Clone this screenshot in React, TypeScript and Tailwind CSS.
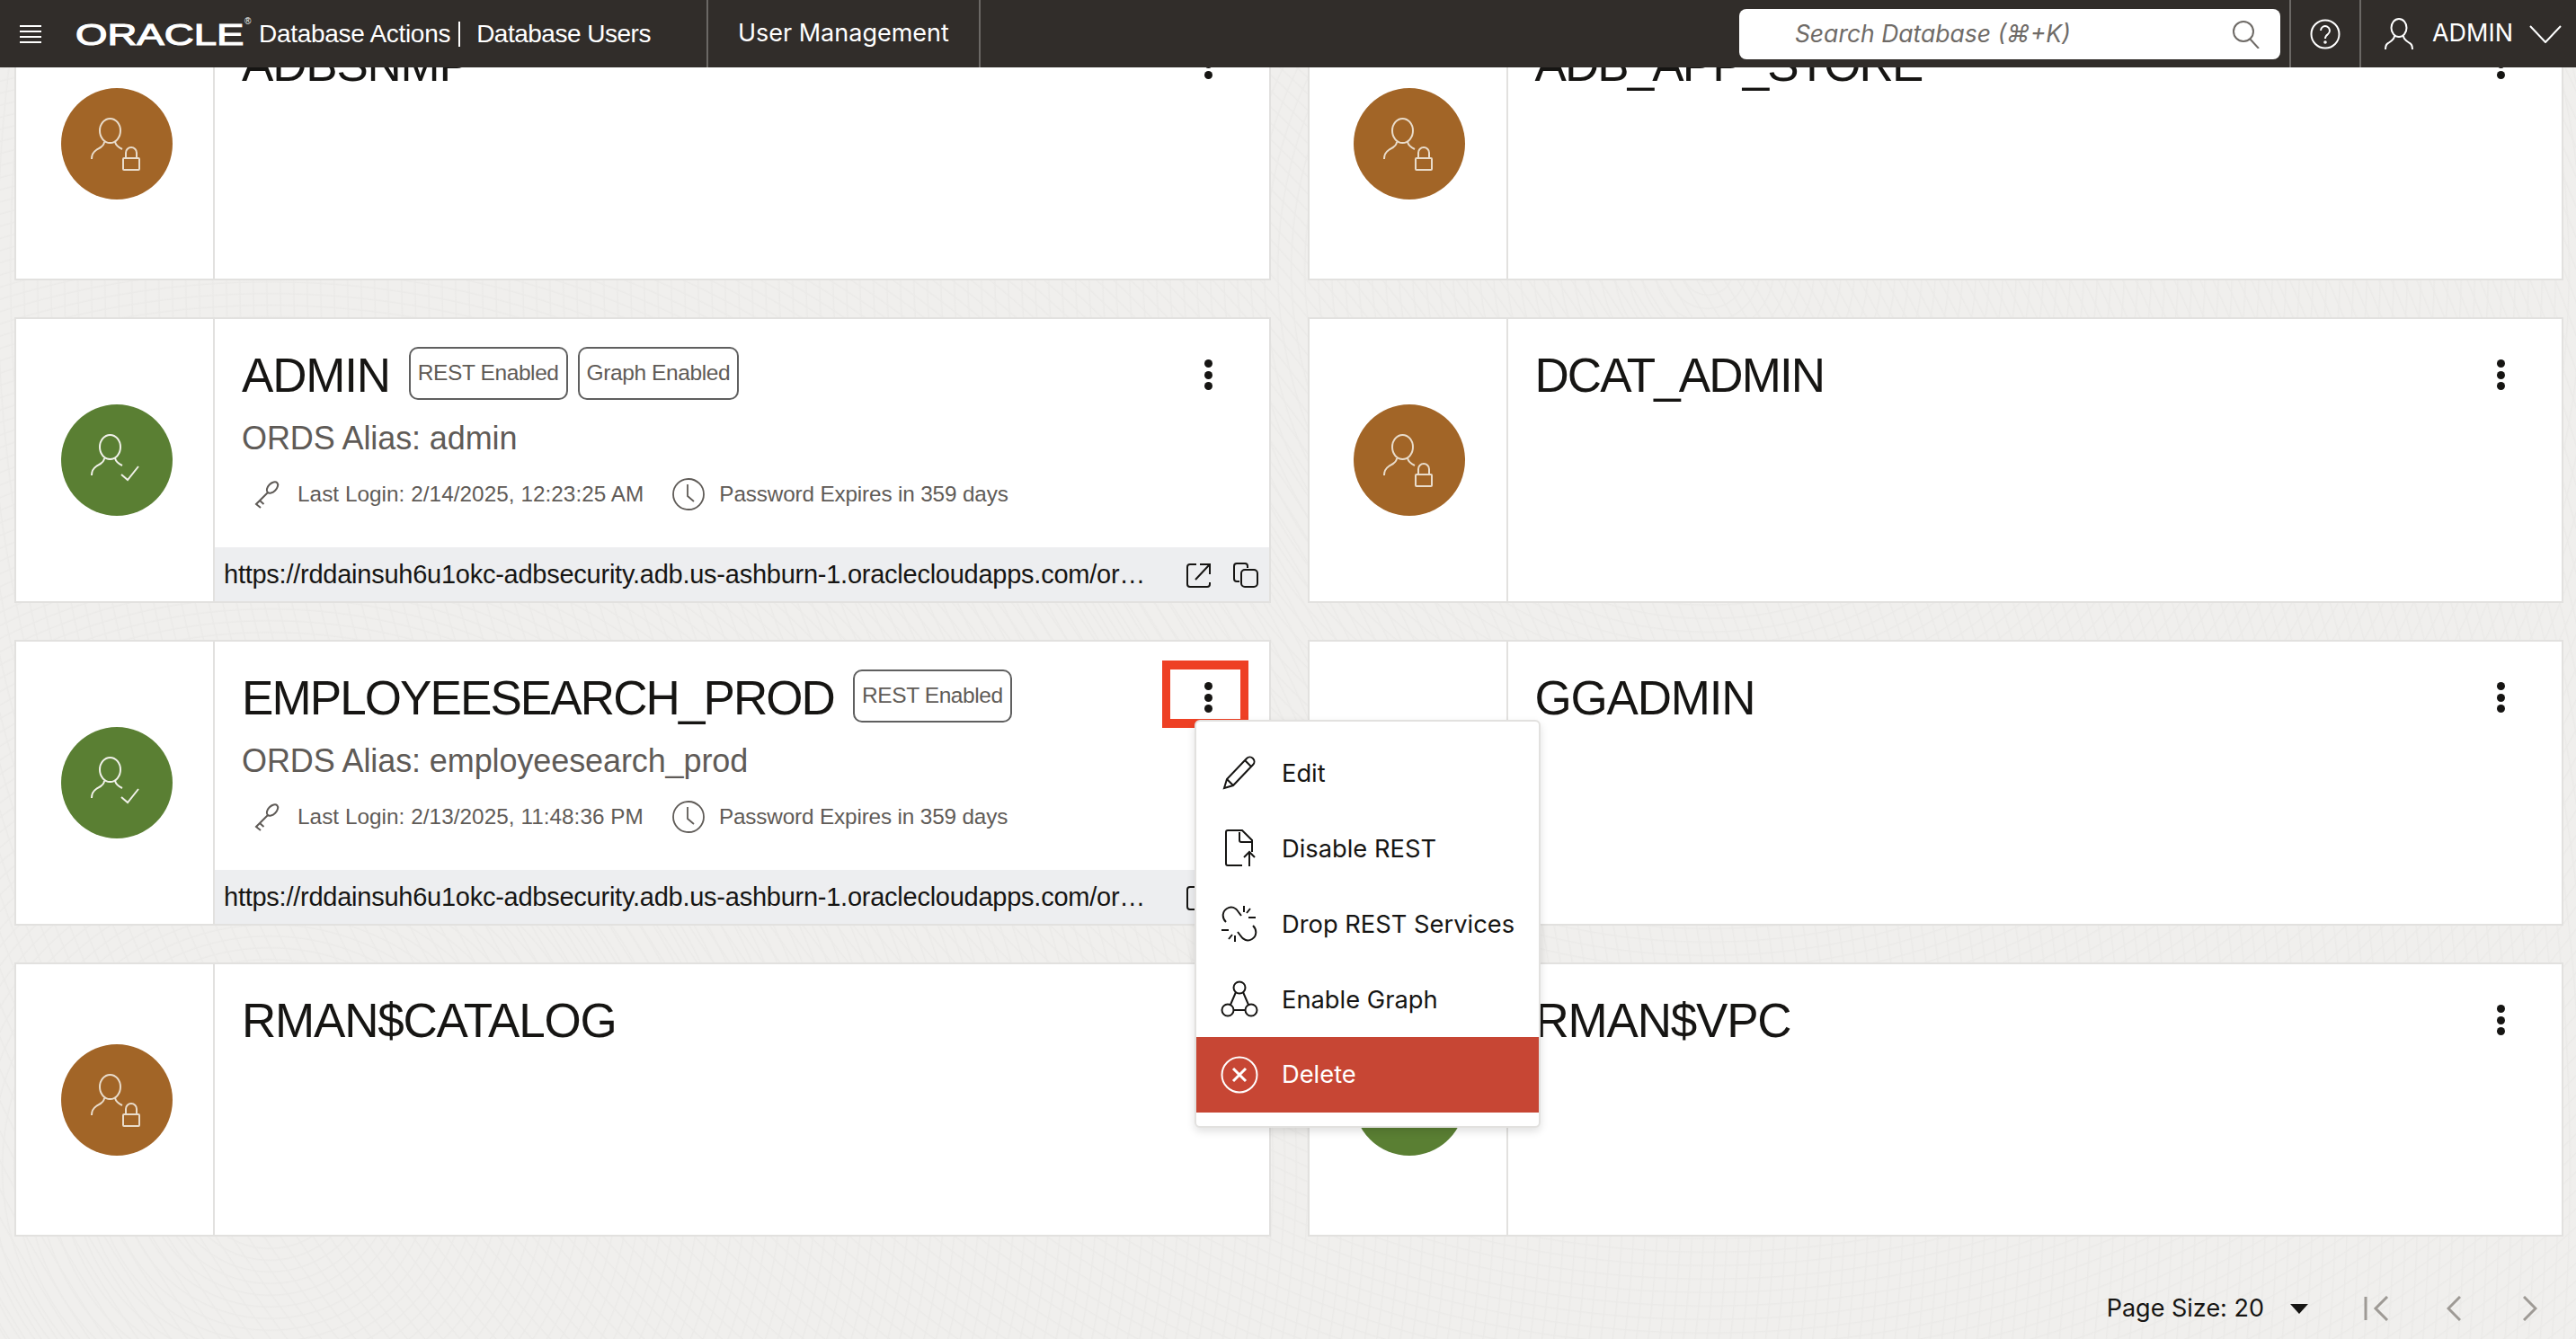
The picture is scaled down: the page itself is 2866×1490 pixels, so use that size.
import type { ReactNode } from "react";

const URL_TEXT =
  "https://rddainsuh6u1okc-adbsecurity.adb.us-ashburn-1.oraclecloudapps.com/ords/admin/_sdw/";

type CardProps = {
  name: string;
  active?: boolean;
  badges?: string[];
  alias?: string;
  login?: string;
  tall?: boolean;
  children?: ReactNode;
};

function UserAvatar({ active }: { active?: boolean }) {
  return (
    <div
      className={`h-[124px] w-[124px] rounded-full ${active ? "bg-[#5a7f33]" : "bg-[#a26527]"}`}
    >
      <svg
        viewBox="0 0 124 124"
        className={`h-full w-full fill-none stroke-2 ${active ? "stroke-[#f1f1ea]" : "stroke-[#e9dccb]"}`}
      >
        <ellipse cx="54.5" cy="47.5" rx="11.5" ry="13.5" />
        <path d="M48 60c0 5-6 7-9 9-3 2-5 5-5 10M60 60c1 4 4 6 8 8" />
        {active ? (
          <path d="M67 78l7 6 12-15" />
        ) : (
          <>
            <rect x="69" y="78" width="18" height="13" rx="1" />
            <path d="M72 78v-6a6 6 0 0 1 12 0v6" />
          </>
        )}
      </svg>
    </div>
  );
}

function Kebab() {
  return (
    <div className="flex h-[34px] w-[10px] flex-col justify-between">
      <span className="h-[9px] w-[9px] rounded-full bg-[#161513]" />
      <span className="h-[9px] w-[9px] rounded-full bg-[#161513]" />
      <span className="h-[9px] w-[9px] rounded-full bg-[#161513]" />
    </div>
  );
}

function KeyIcon() {
  return (
    <svg viewBox="0 0 28 32" className="h-[32px] w-[28px] fill-none stroke-[#5f5b57] stroke-2">
      <ellipse cx="20" cy="8.500" rx="7.500" ry="4.500" transform="rotate(-45 20 8.500)" />
      <path d="M15 14L2 27l5 4M6 23l4.500 4M2 27l5 4" />
    </svg>
  );
}

function ClockIcon() {
  return (
    <svg viewBox="0 0 38 38" className="h-[38px] w-[38px] fill-none stroke-[#5f5b57] stroke-[1.8]">
      <circle cx="19" cy="19" r="17" />
      <path d="M18 8v13l7 6" />
    </svg>
  );
}

function UserCard({ name, active, badges = [], alias, login, tall, children }: CardProps) {
  return (
    <div
      className={`relative flex border-2 border-[#e2e1df] bg-white ${tall ? "h-[318px]" : "h-[305px]"}`}
    >
      <div className="flex w-[221px] shrink-0 items-center justify-center border-r-2 border-[#e2e1df] pl-[4px]">
        <UserAvatar active={active} />
      </div>
      <div className="flex min-w-0 flex-1 flex-col">
        <div className="flex flex-1 flex-col pl-[30px] pr-[62px] pt-[33px]">
          <div className="flex h-[60px] items-center">
            <span
              className={`text-[53px] leading-[60px] text-[#161513] ${name.includes("_") ? "tracking-[-1.9px]" : "tracking-[-1.2px]"}`}
            >
              {name}
            </span>
            {badges.map((badge, i) => (
              <span
                key={badge}
                className={`flex h-[59px] -translate-y-[3px] items-center rounded-[10px] border-2 border-[#5f5f5f] px-[8px] text-[24.500px] tracking-[-0.4px] text-[#5f5b57] ${i === 0 ? "ml-[21px]" : "ml-[11px]"}`}
              >
                {badge}
              </span>
            ))}
            <div className="ml-auto self-start pt-[12px]">
              <Kebab />
            </div>
          </div>
          {alias && (
            <div className="mt-[18px] text-[36px] leading-[44px] tracking-[-0.1px] text-[#5f5b57]">
              ORDS Alias: {alias}
            </div>
          )}
          {login && (
            <div className="mt-[20px] flex h-[40px] items-center text-[24.300px] text-[#5f5b57]">
              <span className="ml-[14px] mr-[20px]">
                <KeyIcon />
              </span>
              <span className="tracking-[0.05px]">Last Login: {login}</span>
              <span className="ml-[31px] mr-[15px]">
                <ClockIcon />
              </span>
              <span className="tracking-[-0.15px]">Password Expires in 359 days</span>
            </div>
          )}
        </div>
        {login && (
          <div className="flex h-[60px] items-center bg-[#edeef0] pl-[10px] pr-[11px] pt-[2px] text-[29px] tracking-[-0.25px] text-[#161513]">
            <span className="min-w-0 flex-1 truncate pr-[31px]">{URL_TEXT}</span>
            <svg viewBox="0 0 30 30" className="mr-[22px] h-[30px] w-[30px] shrink-0 fill-none stroke-[#161513] stroke-2">
              <path d="M12 3H5a3 3 0 0 0-3 3v19a3 3 0 0 0 3 3h19a3 3 0 0 0 3-3v-2M11 20L26 4M16 3h11v11" />
            </svg>
            <svg viewBox="0 0 30 30" className="h-[30px] w-[30px] shrink-0 fill-none stroke-[#161513] stroke-2">
              <path d="M8 22H5a3 3 0 0 1-3-3V5a3 3 0 0 1 3-3h9a3 3 0 0 1 3 3v2" />
              <rect x="10" y="9" width="18" height="19" rx="4" />
            </svg>
          </div>
        )}
      </div>
      {children}
    </div>
  );
}

function MenuItem({ icon, label, danger }: { icon: ReactNode; label: string; danger?: boolean }) {
  return (
    <div
      className={`flex h-[84px] items-center pl-[27px] font-['Inter',sans-serif] text-[27.300px] ${danger ? "bg-[#c74634] text-white" : "text-[#161513]"}`}
    >
      <span className="mr-[26px] flex h-[42px] w-[42px] items-center justify-center">{icon}</span>
      <span className={danger ? "" : "pt-[3px]"}>{label}</span>
    </div>
  );
}

function ActionsMenu() {
  const icon = "h-[42px] w-[42px] fill-none stroke-[#161513] stroke-2";
  return (
    <div className="absolute left-[1311px] top-[87px] z-10 w-[385px] rounded-[6px] border-2 border-[#e2e1df] bg-white py-[15px] shadow-[0_4px_10px_rgba(0,0,0,0.12)]">
      <MenuItem
        label="Edit"
        icon={
          <svg viewBox="0 0 42 42" className={icon}>
            <path d="M4 38l3-10L29 5c2-2 5-2 7 0s2 5 0 7L14 35zM7 28l7 7M27 7l7 7" />
          </svg>
        }
      />
      <MenuItem
        label="Disable REST"
        icon={
          <svg viewBox="0 0 42 42" className={icon}>
            <path d="M24 40H8a2 2 0 0 1-2-2V3a2 2 0 0 1 2-2h16l11 11v13M21 3v9a2 2 0 0 0 2 2h12M32 41V25M26 31l6-6 6 6" />
          </svg>
        }
      />
      <MenuItem
        label="Drop REST Services"
        icon={
          <svg viewBox="0 0 42 42" className={icon}>
            <path d="M6 19C1 14 2 7 7 4s10-1 13 4l3 4M36 23c5 5 4 12-1 15s-10 1-13-4l-3-4M26 1v7M33 4l-4 5M39 14h-8M1 28h8M9 38l4-5M16 41v-7" />
          </svg>
        }
      />
      <MenuItem
        label="Enable Graph"
        icon={
          <svg viewBox="0 0 42 42" className={icon}>
            <circle cx="21" cy="8" r="6.500" />
            <circle cx="8" cy="33" r="6.500" />
            <circle cx="34" cy="33" r="6.500" />
            <path d="M17 13L11 27M25 13l6 14M15 33h12" />
          </svg>
        }
      />
      <MenuItem
        danger
        label="Delete"
        icon={
          <svg viewBox="0 0 42 42" className="h-[42px] w-[42px] fill-none stroke-white stroke-2">
            <circle cx="21" cy="21" r="19.500" />
            <path className="stroke-[3]" d="M14 14l14 14M28 14L14 28" />
          </svg>
        }
      />
    </div>
  );
}

function TopBar() {
  return (
    <header className="relative z-20 flex h-[75px] shrink-0 items-center bg-[#312d2a] text-white">
      <div className="ml-[22px] flex w-[24px] flex-col gap-[4px]">
        <span className="h-[2px] bg-white" />
        <span className="h-[2px] bg-white" />
        <span className="h-[2px] bg-white" />
        <span className="h-[2px] bg-white" />
      </div>
      <div className="relative ml-[38px] flex w-[204px] items-center">
        <span className="origin-left scale-x-[1.34] text-[34px] leading-none [-webkit-text-stroke:1.2px_white]">
          ORACLE
        </span>
        <span className="absolute left-[188px] top-[-2px] text-[10px] leading-none">®</span>
      </div>
      <span className="text-[28px] tracking-[-0.3px]">Database Actions</span>
      <span className="ml-[9px] mr-[18px] h-[28px] w-[2px] bg-white" />
      <span className="text-[28px] tracking-[-0.5px]">Database Users</span>
      <div className="ml-[62px] flex h-full items-center border-x-2 border-[#6b6865] px-[33px] font-['Inter',sans-serif] text-[27px]">
        User Management
      </div>
      <div className="ml-auto flex h-[56px] w-[602px] items-center rounded-[8px] bg-white pl-[62px] pr-[22px] font-['Inter',sans-serif] text-[26.500px] italic text-[#6f6b67]">
        <span className="flex-1">Search Database (⌘+K)</span>
        <svg viewBox="0 0 32 32" className="h-[32px] w-[32px] fill-none stroke-[#6f6b67] stroke-2">
          <circle cx="13" cy="13" r="11" />
          <path d="M20 21l10 11" />
        </svg>
      </div>
      <div className="ml-[10px] flex h-full w-[80px] items-center justify-center border-x-2 border-[#6b6865]">
        <svg viewBox="0 0 34 34" className="h-[34px] w-[34px] fill-none stroke-white stroke-2">
          <circle cx="17" cy="17" r="15.500" />
          <path d="M12 13a5 5 0 1 1 8 4c-2 1.500-3 2.500-3 5" />
          <circle cx="17" cy="26" r="0.800" />
        </svg>
      </div>
      <div className="flex items-center pl-[26px] pr-[16px]">
        <svg viewBox="0 0 32 36" className="h-[36px] w-[32px] fill-none stroke-white stroke-2">
          <ellipse cx="16" cy="11" rx="8.500" ry="10" />
          <path d="M11 20c0 4-4 6-7 8-2 1-3 3-3 7M21 20c0 4 4 6 7 8 2 1 3 3 3 7" />
        </svg>
        <span className="ml-[21px] font-['Inter',sans-serif] text-[27px]">ADMIN</span>
        <svg viewBox="0 0 36 20" className="ml-[18px] h-[20px] w-[36px] fill-none stroke-white stroke-2">
          <path d="M1 1l17 18L35 1" />
        </svg>
      </div>
    </header>
  );
}

function Pager() {
  return (
    <div className="flex h-[52px] items-center justify-end pr-[29px] pt-[2px] font-['Inter',sans-serif] text-[27px] text-[#161513]">
      <span>Page Size: 20</span>
      <span className="ml-[29px] h-0 w-0 border-x-[10px] border-t-[11px] border-x-transparent border-t-[#161513]" />
      <svg viewBox="0 0 28 28" className="ml-[62px] h-[28px] w-[28px] fill-none stroke-[#9e9a95] stroke-[3]">
        <path d="M2 1v26M26 1L13 14l13 13" />
      </svg>
      <svg viewBox="0 0 16 28" className="ml-[64px] h-[28px] w-[16px] fill-none stroke-[#9e9a95] stroke-[3]">
        <path d="M15 1L2 14l13 13" />
      </svg>
      <svg viewBox="0 0 16 28" className="ml-[69px] h-[28px] w-[16px] fill-none stroke-[#9e9a95] stroke-[3]">
        <path d="M1 1l13 13L1 27" />
      </svg>
    </div>
  );
}

export default function App() {
  return (
    <div className="flex h-[1490px] w-[2866px] flex-col overflow-hidden bg-[#f0efed] bg-[repeating-radial-gradient(circle_at_300px_1300px,transparent_0,transparent_10px,#ebeae8_11px,transparent_13px),repeating-radial-gradient(circle_at_1900px_300px,transparent_0,transparent_12px,#ebeae8_13px,transparent_15px)] font-['Liberation_Sans',sans-serif]">
      <TopBar />
      <main className="-mt-[68px] pl-[16px] pr-[14px]">
        <div className="grid grid-cols-2 gap-x-[41px] gap-y-[41px]">
          <UserCard name="ADBSNMP" />
          <UserCard name="ADB_APP_STORE" />
          <UserCard
            tall
            active
            name="ADMIN"
            badges={["REST Enabled", "Graph Enabled"]}
            alias="admin"
            login="2/14/2025, 12:23:25 AM"
          />
          <UserCard tall name="DCAT_ADMIN" />
          <UserCard
            tall
            active
            name="EMPLOYEESEARCH_PROD"
            badges={["REST Enabled"]}
            alias="employeesearch_prod"
            login="2/13/2025, 11:48:36 PM"
          >
            <div className="absolute left-[1275px] top-[21px] h-[75px] w-[96px] border-x-[9px] border-y-[10px] border-[#ee4024]" />
            <ActionsMenu />
          </UserCard>
          <UserCard tall name="GGADMIN" />
          <UserCard name="RMAN$CATALOG" />
          <UserCard active name="RMAN$VPC" />
        </div>
        <div className="mt-[53px]">
          <Pager />
        </div>
      </main>
    </div>
  );
}
